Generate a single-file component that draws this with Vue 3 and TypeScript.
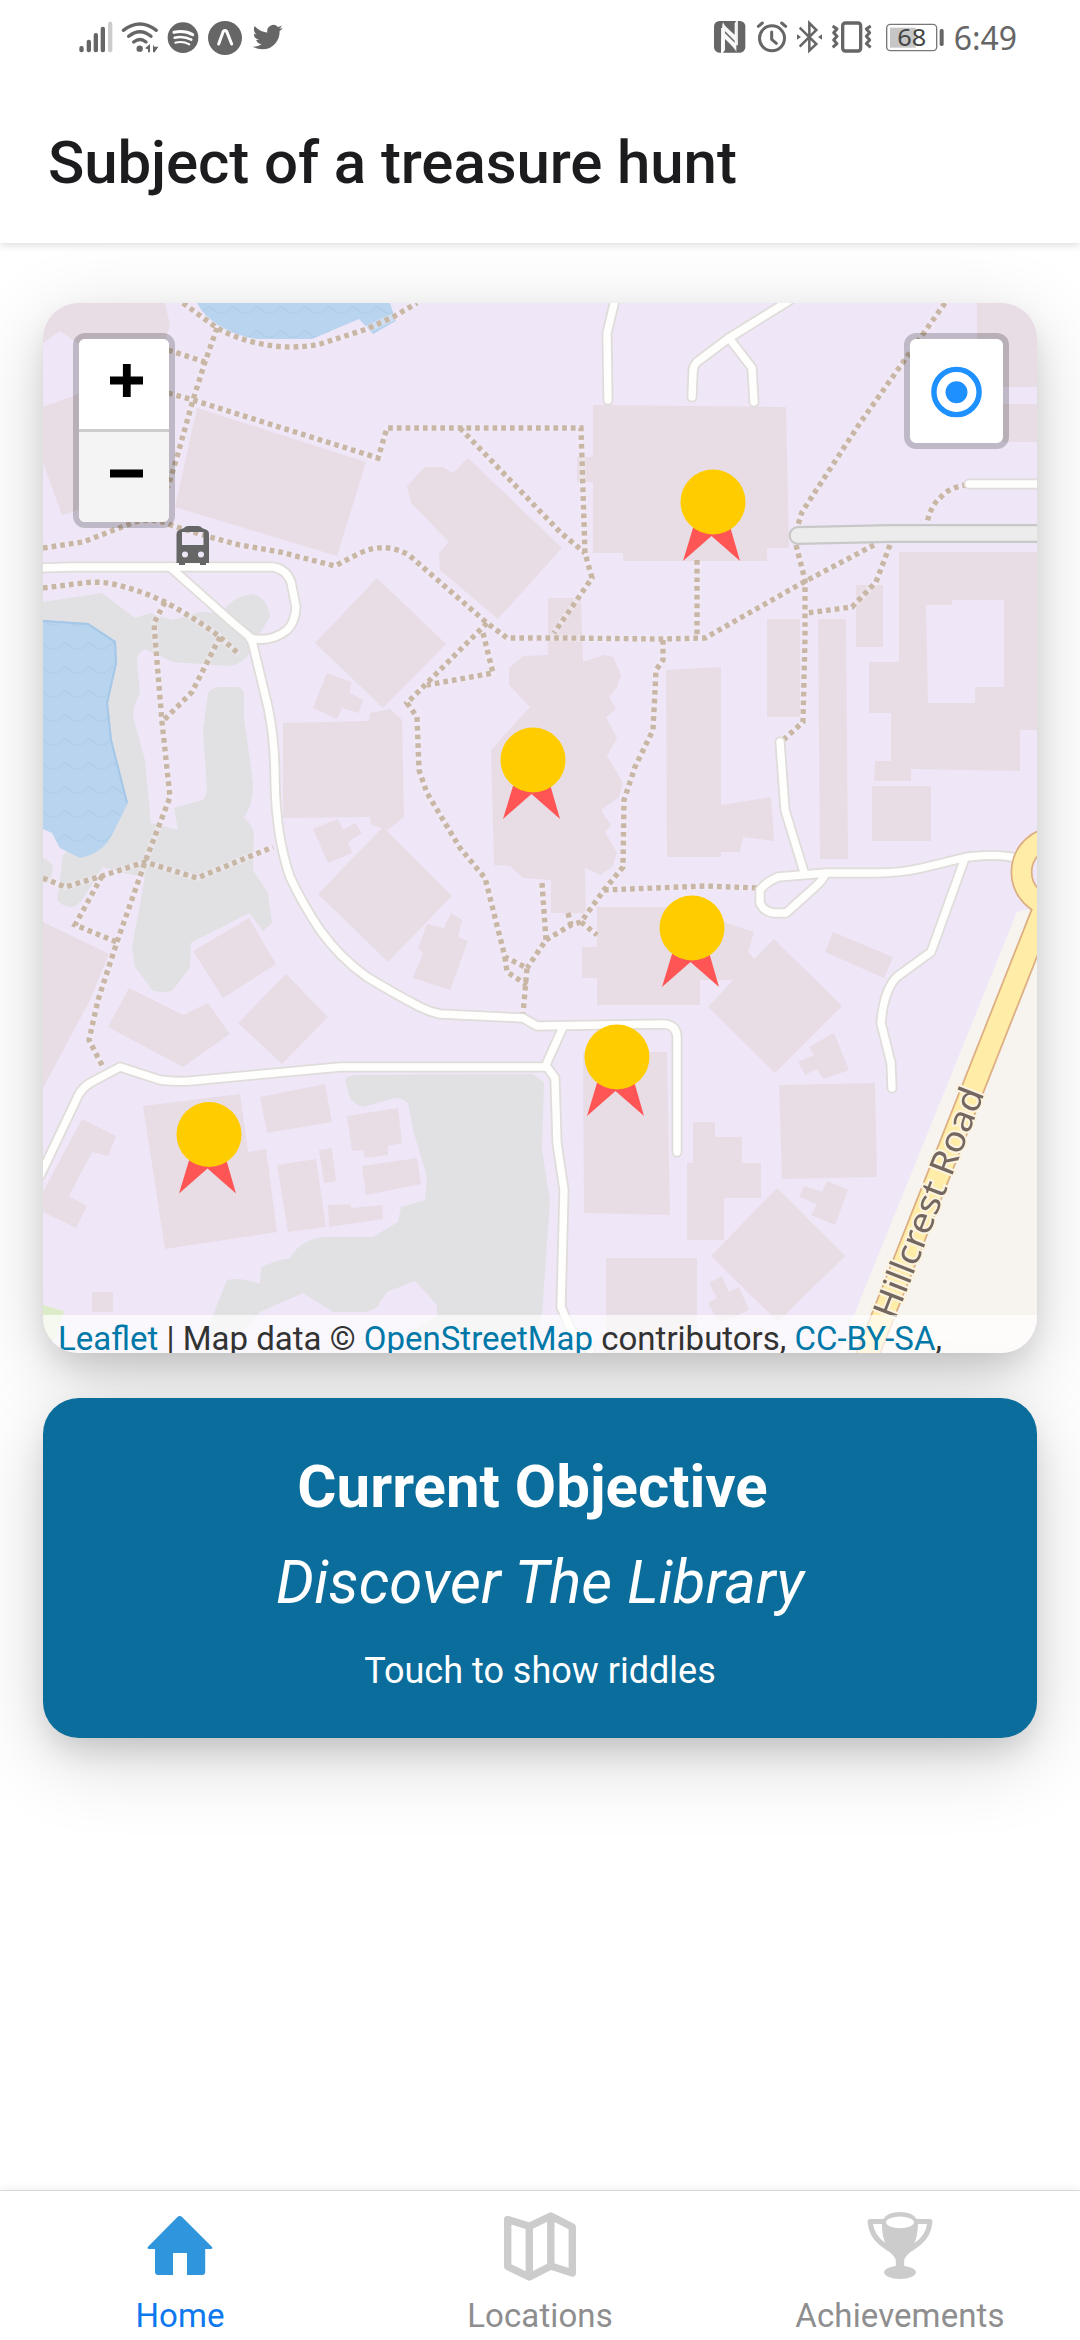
<script setup lang="ts">
interface Point {
  x: number
  y: number
}

interface Tab {
  id: 'home' | 'locations' | 'achievements'
  label: string
  active: boolean
}

const tabs: Tab[] = [
  { id: 'home', label: 'Home', active: true },
  { id: 'locations', label: 'Locations', active: false },
  { id: 'achievements', label: 'Achievements', active: false },
]

const medals: Point[] = [
  { x: 713, y: 502 },
  { x: 533, y: 760 },
  { x: 692, y: 928 },
  { x: 617, y: 1057 },
  { x: 209, y: 1134.5 },
]

const grass: string[] = [
  'M43 602L102 593L135 618L150 613L173 620L200 612L222 613Q232 596 253 594Q268 598 270 617L260 633L247 657Q238 666 227 666L173 662L145 649Q136 653 137 663L140 693Q133 705 133 717L145 760L151 823L178 830L174 808L202 800Q207 796 207 790L203 730L208 693Q212 687 220 687H238Q244 689 244 695L244 717L253 783Q254 802 244 818Q254 826 254 836L253 870L268 893L272 923L263 931L249 913L191 943L190 968L172 991Q162 993 153 991L135 967L132 947L145 877L123 873L103 867L82 900Q75 908 70 907Q60 905 57 900L63 855L80 840L60 780H43Z',
  'M43 858Q52 862 53 867L50 883H43Z',
  'M345 1080Q348 1075 357 1075L533 1074L544 1082L542 1150L550 1200L542 1315L535 1340H400L437 1315V1305L415 1281L387 1292L377 1307Q370 1312 363 1312H333L303 1293L260 1312L235 1340H205L213 1315L227 1280Q240 1277 260 1284L261 1268Q272 1261 290 1258Q300 1240 323 1237H373L398 1222L401 1207L425 1200L427 1177L413 1130L408 1103Q402 1098 395 1098L363 1107Q352 1103 350 1098Z',
]

const ponds: string[] = [
  'M197 303Q205 318 220 327Q238 337 257 339H312L359 319L373 334L396 321L390 303Z',
  'M43 620L88 623L116 641L117 663L108 703L112 740L128 803L113 833Q104 853 80 858L60 848L52 833L43 829Z',
]

const buildings: string[] = [
  '43,303 165,303 170,325 164,345 80,345 60,331 43,343',
  '43,407 73,396 90,390 90,505 73,512 62,515 43,463',
  '197,408 366,462 337,556 175,507',
  '468,458 562,548 498,619 440,570 439,553 449,542 411,503 407,486 425,467 443,467 453,473',
  '377,578 446,644 383,708 315,643',
  '977,303 1037,303 1037,387 977,387',
  '1000,404 1037,404 1037,442 1000,442',
  '593,405 786,407 789,548 767,548 767,561 623,561 623,553 593,553 593,482 577,482 577,457 593,457',
  '872,786 931,786 931,841 872,841',
  '856,585 883,585 883,647 856,647',
  '818,619 846,619 848,859 820,859',
  '767,619 800,619 800,717 767,717',
  '666,670 721,667 721,805 771,797 774,841 743,837 740,852 721,852 721,857 667,857',
  '548,598 581,598 583,662 604,655 613,657 621,675 617,687 609,697 616,709 606,717 617,738 607,756 623,783 619,797 601,810 611,825 605,832 617,853 612,867 600,875 585,868 586,913 551,913 551,880 523,878 510,866 494,865 491,750 530,707 509,685 509,668 523,656 548,655',
  '597,907 678,907 754,932 748,952 754,959 774,939 842,1006 775,1073 708,1007 733,980 700,980 700,1005 597,1005 597,978 582,978 582,947 597,947',
  '833,932 893,957 884,978 825,952',
  '583,1052 667,1052 670,1215 584,1213',
  '693,1122 715,1122 715,1137 742,1137 742,1163 761,1163 761,1198 724,1198 724,1240 687,1240 687,1163 693,1163',
  '779,1085 875,1083 877,1177 782,1179',
  '777,1188 845,1256 778,1322 711,1256',
  '606,1258 697,1258 697,1353 606,1353',
  '809,1047 834,1033 849,1070 823,1079 817,1069 805,1075 798,1062 814,1055',
  '827,1181 848,1190 835,1225 811,1215 817,1204 799,1197 804,1186 822,1192',
  '709,1283 722,1276 729,1292 739,1287 749,1310 719,1323 708,1303 717,1298',
  '327,673 351,682 350,693 363,700 359,713 342,708 337,719 313,708',
  '283,723 369,721 370,713 390,709 402,720 404,817 388,830 371,825 370,817 283,818',
  '313,829 338,819 343,830 355,823 362,833 348,842 352,853 328,863',
  '383,827 452,896 388,962 318,894',
  '427,924 444,928 451,913 462,920 458,937 468,941 450,990 413,978 423,953 418,948',
  '43,922 109,954 90,1000 43,1088',
  '249,918 276,964 223,998 193,951',
  '129,988 183,1015 208,1003 230,1034 183,1067 108,1027',
  '286,974 328,1017 282,1064 238,1023',
  '82,1119 116,1136 108,1156 92,1152 69,1196 87,1206 76,1228 43,1212 43,1192',
  '143,1106 240,1094 248,1152 266,1149 277,1232 165,1249',
  '260,1097 325,1084 332,1122 267,1133',
  '347,1116 398,1108 402,1143 388,1146 388,1155 365,1158 363,1150 352,1151',
  '362,1166 417,1158 421,1184 366,1195',
  '319,1150 332,1148 336,1181 324,1183',
  '277,1165 316,1159 326,1227 288,1232',
  '328,1205 350,1204 352,1208 382,1205 383,1219 329,1227',
  '92,1292 113,1292 113,1312 92,1312',
]

const footpaths: string[] = [
  'M183 303L217 328Q235 338 257 343Q274 347 290 347Q306 347 320 344L367 329L393 317L417 303',
  'M217 328L205 362L193 400L177 457L168 487',
  'M168 350L205 362',
  'M168 393L193 400L378 458L387 428H581L585 553L592 578L554 633',
  'M460 428L560 532L585 553',
  'M43 548L83 542L127 525Q150 515 173 526L210 537L240 545L280 552L335 566L360 553Q387 541 410 556L487 623L507 638H560L662 639L705 638L802 583L874 545',
  'M43 588L83 583Q98 581 113 584Q140 590 165 602Q195 618 220 637L239 654',
  'M165 602L154 623L155 637L162 722L170 797L145 862L117 942L98 1000L89 1040L103 1067',
  'M220 637L192 692L162 722',
  'M43 878L65 887L102 876L145 862L197 878L273 847',
  'M102 876L75 925L117 942',
  'M487 623L407 703L417 717L419 770L427 793L460 848L485 878L505 957L527 968L523 1014',
  'M505 957L507 972L527 985',
  'M483 633L493 673L427 685',
  'M542 883L546 940L527 968',
  'M546 940L571 925L581 922L604 890L623 867L624 800L635 767L653 730L656 670L663 660V638',
  'M568 913L571 925',
  'M581 922L597 935',
  'M604 890L705 886L759 888',
  'M697 560V638',
  'M945 303L860 423L802 512L798 525',
  'M796 545L805 580L805 638L803 722L781 742',
  'M967 485Q949 487 940 498Q931 505 927 523',
  'M890 545L876 582L852 607L807 613',
]

const roads: string[] = [
  'M40 568L70 567H273Q286 569 291 582L296 607Q295 623 287 630Q271 643 250 638',
  'M170 567L233 623L250 637L253 645L268 707Q275 740 275 780Q276 837 290 877Q302 903 320 930Q340 958 367 977Q395 994 420 1007Q430 1012 440 1014L523 1018L537 1026L663 1024Q677 1025 677 1037V1152',
  'M40 1176L78 1096Q82 1088 90 1083L120 1067L160 1080Q175 1082 190 1081L340 1067H547L555 1078L557 1143L564 1190L561 1307L571 1330L590 1350',
  'M563 1027L545 1067',
  'M615 300L607 333L608 400',
  'M790 300L729 338L697 362Q693 366 693 372L692 397',
  'M729 338L752 368L754 402',
  'M969 484H1040',
  'M780 742L785 810L804 872',
  'M1020 859Q1000 853 967 857L922 868Q900 873 877 873H826L778 877Q766 882 760 890V903Q764 912 774 913H786L815 887Q823 880 826 873',
  'M965 858L931 952L898 976Q884 988 881 1023L891 1063L892 1088',
]
</script>

<template>
  <div class="screen">
    <div class="statusbar">
      <svg class="status-left" viewBox="0 0 720 240" fill="#666">
        <rect x="58" y="138" width="13" height="19" rx="6" />
        <rect x="80" y="119" width="13" height="38" rx="6" />
        <rect x="101" y="99" width="13" height="58" rx="6" />
        <rect x="122" y="80" width="13" height="77" rx="6" />
        <rect x="144" y="65" width="13" height="92" rx="6" fill="#ccc" />
        <g fill="none" stroke="#666" stroke-width="10" stroke-linecap="round">
          <path d="M190 91Q240 53 289 91" />
          <path d="M206 109Q240 81 273 109" />
          <path d="M221 126Q240 111 258 126" />
        </g>
        <circle cx="239" cy="146" r="9.500" />
        <path d="M255 145L270 132V157H264V148ZM279 134L283 140H295L284 157H279Z" />
        <circle cx="369" cy="113" r="46" />
        <g fill="none" stroke="#fff" stroke-linecap="round">
          <path d="M342 97Q373 90 398 104" stroke-width="9" />
          <path d="M344 113Q372 107 394 119" stroke-width="7.500" />
          <path d="M346 128Q369 123 388 133" stroke-width="6" />
        </g>
        <circle cx="495" cy="114" r="51" />
        <path d="M476 132L490 94Q495 89 500 94L515 132" fill="none" stroke="#fff" stroke-width="9" stroke-linecap="round" stroke-linejoin="round" />
        <path transform="translate(578 66.500) scale(3.750)" d="M23.953 4.57a10 10 0 01-2.825.775 4.958 4.958 0 002.163-2.723c-.951.555-2.005.959-3.127 1.184a4.92 4.92 0 00-8.384 4.482C7.69 8.095 4.067 6.13 1.64 3.162a4.822 4.822 0 00-.666 2.475c0 1.71.87 3.213 2.188 4.096a4.904 4.904 0 01-2.228-.616v.06a4.923 4.923 0 003.946 4.827 4.996 4.996 0 01-2.212.085 4.936 4.936 0 004.604 3.417 9.867 9.867 0 01-6.102 2.105c-.39 0-.779-.023-1.17-.067a13.995 13.995 0 007.557 2.209c9.053 0 13.998-7.496 13.998-13.985 0-.21 0-.42-.015-.63A9.935 9.935 0 0024 4.59z" />
      </svg>
      <svg class="status-right" viewBox="0 0 1020 240" fill="#666">
        <rect x="42" y="63" width="94" height="95" rx="16" />
        <path d="M66 84V158M111 62V136" stroke="#fff" stroke-width="5" fill="none" />
        <path d="M69 67Q74 80 104 104V122L75 93V150L69 158L63 158L67 75ZM109 156Q106 146 75 117V100L104 128V70L109 63Z" fill="#fff" opacity=".95" />
        <g fill="none" stroke="#666" stroke-width="9" stroke-linecap="round" stroke-linejoin="round">
          <circle cx="216" cy="115" r="37.500" />
          <path d="M215 96V118L229 130M175 79L187 69M257 79L245 69" />
        </g>
        <path d="M299 83L349 132L328 152V69L349 90L299 140" fill="none" stroke="#666" stroke-width="7.500" />
        <path d="M291 103L303 111L291 119ZM366 103L354 111L366 119Z" />
        <rect x="428" y="69" width="54" height="84" rx="8" fill="none" stroke="#666" stroke-width="10" />
        <g fill="none" stroke="#666" stroke-width="9" stroke-linejoin="round">
          <path d="M398 78L411 87L401 98L411 109L401 120L411 131L398 142" />
          <path d="M512 78L499 87L509 98L499 109L509 120L499 131L512 142" />
        </g>
        <rect x="560" y="73" width="150" height="79" rx="11" fill="none" stroke="#777" stroke-width="4" />
        <rect x="570" y="83" width="77" height="60" fill="#c6c6c6" />
        <rect x="719" y="87" width="12" height="51" rx="5" />
        <text x="592" y="137" font-size="72" textLength="87" lengthAdjust="spacingAndGlyphs" fill="#444">68</text>
        <text x="761" y="150" font-size="100" textLength="190" lengthAdjust="spacingAndGlyphs">6:49</text>
      </svg>
    </div>

    <header class="header">
      <h1 class="title">Subject of a treasure hunt</h1>
    </header>

    <main class="content">
      <section class="map">
        <svg class="tiles" viewBox="43 303 994 1050">
          <defs>
            <pattern id="waves" x="5" y="11" width="24" height="24" patternUnits="userSpaceOnUse">
              <rect width="24" height="24" fill="#b8d4ee" />
              <path d="M0 14Q3 15 6 12L10 9Q12 7 14 9L18 12Q21 15 24 14" fill="none" stroke="#b0cdea" stroke-width="1.300" />
            </pattern>
          </defs>
          <rect x="43" y="303" width="994" height="1050" fill="#efe7f8" />
          <g class="soft">
            <path v-for="d in grass" :key="d" :d="d" fill="#e1e1e4" />
            <path d="M43 1305L64 1311L55 1340H43Z" fill="#dcecc9" />
            <path v-for="d in ponds" :key="d" :d="d" fill="url(#waves)" />
            <path d="M43 621L88 624L115 642L116 663L107 703L111 740L127 803" fill="none" stroke="#a5c7e8" stroke-width="2" />
            <path d="M1017 912L1050 905V1365H834Z" fill="#f7f4ef" />
            <polygon v-for="p in buildings" :key="p" :points="p" fill="#e8dce5" />
            <path
              fill="#e8dce5"
              fill-rule="evenodd"
              d="M899 552H1040V730H1020V771L911 769V781H874L875 761H891V713H869V662H899ZM926 605H952V600H1004V687H975V703H928Z"
            />
            <g fill="none" stroke="#f4eef6" stroke-width="7" stroke-linejoin="round" opacity=".4">
              <path v-for="d in footpaths" :key="d" :d="d" />
            </g>
            <g class="dots">
              <path v-for="d in footpaths" :key="d" :d="d" />
            </g>
            <g class="casing">
              <path v-for="d in roads" :key="d" :d="d" />
            </g>
            <g class="lane">
              <path v-for="d in roads" :key="d" :d="d" />
            </g>
            <g fill="none" stroke-linecap="round">
              <path d="M798 535.500L890 533.500H1050" stroke="#c9c8c9" stroke-width="19" />
              <path d="M798 535.500L890 533.500H1050" stroke="#ececec" stroke-width="14.500" />
            </g>
            <g fill="none">
              <path d="M1049 896L858 1379" stroke="#dcae82" stroke-width="24" />
              <circle cx="1056" cy="872" r="34.500" stroke="#dcae82" stroke-width="22" />
              <path d="M1049 896L858 1379" stroke="#ffeca6" stroke-width="20.500" />
              <circle cx="1056" cy="872" r="34.500" stroke="#ffeca6" stroke-width="18.500" />
            </g>
            <text class="road-name" transform="translate(895 1321) rotate(-68.500)" textLength="245" lengthAdjust="spacingAndGlyphs">Hillcrest Road</text>
            <path
              fill="#666"
              fill-rule="evenodd"
              d="M184 528Q185 526 188 526H198Q201 526 202 528L207 530Q209 531 209 534V563H206V565H200V563H185V565H179V563H176.500V534Q176.500 531 179 530ZM182 532V545H203.500V532ZM182 554.500a3 3 0 1 0 6 0a3 3 0 1 0-6 0ZM198 554.500a3 3 0 1 0 6 0a3 3 0 1 0-6 0Z"
            />
          </g>
          <g v-for="m in medals" :key="m.x" :transform="`translate(${m.x} ${m.y})`">
            <path d="M-20 26L-30 59L-1.500 34L27 59L17.500 26Z" fill="#ff5555" />
            <circle r="32.500" fill="#ffcc00" />
          </g>
        </svg>

        <div class="control zoom">
          <button class="key" aria-label="Zoom in">
            <svg viewBox="0 0 90 90"><path d="M31 41.500H64M47.800 25V58" stroke="#000" stroke-width="7.800" /></svg>
          </button>
          <button class="key key-out" aria-label="Zoom out">
            <svg viewBox="0 0 90 90"><path d="M31 41.500H64" stroke="#000" stroke-width="7.800" /></svg>
          </button>
        </div>

        <div class="control locate">
          <svg viewBox="0 0 93 104">
            <circle cx="46.500" cy="53" r="22.600" fill="none" stroke="#1e90ff" stroke-width="5.400" />
            <circle cx="46.500" cy="53.300" r="11" fill="#1e90ff" />
          </svg>
        </div>

        <div class="attribution">
          <a>Leaflet</a> | Map data © <a>OpenStreetMap</a> contributors, <a>CC-BY-SA</a>,
        </div>
      </section>

      <section class="objective">
        <h2 class="objective-title">Current Objective&nbsp;</h2>
        <p class="objective-name">Discover The Library</p>
        <p class="objective-hint">Touch to show riddles</p>
      </section>
    </main>

    <nav class="tabs">
      <a v-for="tab in tabs" :key="tab.id" class="tab" :class="{ active: tab.active }">
        <svg v-if="tab.id === 'home'" class="icon" viewBox="0 0 72 72">
          <path
            fill="#2f95dc"
            d="M33.200 6.200Q35.700 3.800 38.300 6.200L67.800 35.800Q69.300 38 67 38H61.200V61Q61.200 64 58 64H43V42H29V64H14.500Q11 64 11 61V38H5Q2.700 38 4 35.800Z"
          />
        </svg>
        <svg v-else-if="tab.id === 'locations'" class="icon" viewBox="0 0 72 72">
          <g fill="none" stroke="#ccc" stroke-width="7.400" stroke-linejoin="round">
            <path d="M3.700 8.500L25.300 15.300L46.800 5L68.300 16V62L46.800 55L25.300 66L3.700 55.500ZM25.300 15.300V66M46.800 5V55" />
          </g>
        </svg>
        <svg v-else class="icon" viewBox="0 0 72 72">
          <g transform="translate(3.500 1)" fill="#ccc">
            <path
              fill-rule="evenodd"
              d="M16 7Q20 0 32.500 0Q45 0 49 7H62.500Q65 7 65 9.500Q64 24 53 33Q48 37 43 40Q37 45 36.700 48.500V54.500H28.300V48.500Q28 45 22 40Q17 37 12 33Q1 24 0 9.500Q0 7 2.500 7ZM18.500 10.300A14 5.900 0 1 0 46.500 10.300A14 5.900 0 1 0 18.500 10.300ZM5.500 12Q7 23 17.800 31Q14.500 24 14.500 12ZM50.500 12Q50 24 47 31Q58.500 23 59.500 12Z"
            />
            <ellipse cx="32.500" cy="60.300" rx="16" ry="6.600" />
          </g>
        </svg>
        <span class="tab-label">{{ tab.label }}</span>
      </a>
    </nav>
  </div>
</template>

<style>
body {
  background: #fff;
}
</style>

<style scoped>
.screen {
  width: 1080px;
  height: 2340px;
  display: flex;
  flex-direction: column;
  overflow: hidden;
  background: #fff;
  font-family: Roboto, sans-serif;
}
.statusbar {
  flex: none;
  height: 80px;
  display: flex;
  justify-content: space-between;
  padding: 0 40px 0 60px;
  background: #fff;
  z-index: 2;
}
.status-left {
  width: 240px;
  height: 80px;
}
.status-right {
  width: 340px;
  height: 80px;
  font-family: "Noto Sans", sans-serif;
}
.header {
  flex: none;
  height: 163px;
  display: flex;
  align-items: center;
  padding: 2px 48px 0;
  box-sizing: border-box;
  background: #fff;
  box-shadow: 0 2px 8px rgba(0, 0, 0, 0.14);
  clip-path: inset(0 0 -30px 0);
  z-index: 2;
}
.title {
  margin: 0;
  font-size: 60px;
  line-height: 70px;
  font-weight: 500;
  letter-spacing: -0.1px;
  color: #1c1c1e;
}
.content {
  flex: 1;
  display: flex;
  flex-direction: column;
  gap: 45px;
  padding: 60px 43px 0;
}
.map,
.objective {
  position: relative;
  border-radius: 36px;
  box-shadow: 0 16px 32px -6px rgba(0, 0, 0, 0.14), 0 20px 80px rgba(0, 0, 0, 0.17);
}
.map {
  height: 1050px;
  overflow: hidden;
  flex: none;
}
.tiles {
  display: block;
  width: 994px;
  height: 1050px;
}
.soft {
  filter: blur(0.7px);
}
.dots {
  fill: none;
  stroke: #c9b7a6;
  stroke-width: 5.4;
  stroke-dasharray: 4.700 4;
}
.casing,
.lane {
  fill: none;
  stroke-linecap: round;
  stroke-linejoin: round;
}
.casing {
  stroke: #dfdcda;
  stroke-width: 11;
}
.lane {
  stroke: #fefefc;
  stroke-width: 7.4;
}
.road-name {
  font-family: "Noto Sans", sans-serif;
  font-size: 35px;
  fill: #74675f;
  stroke: #fbf3df;
  stroke-width: 4;
  paint-order: stroke;
}
.control {
  position: absolute;
  top: 30px;
  border: 6px solid rgba(0, 0, 0, 0.2);
  border-radius: 12px;
  background: #fff;
  background-clip: padding-box;
  overflow: hidden;
}
.zoom {
  left: 30px;
  width: 90px;
  display: flex;
  flex-direction: column;
}
.key {
  display: block;
  height: 90px;
  padding: 0;
  border: 0;
  background: #fff;
}
.key svg,
.locate svg {
  display: block;
}
.key-out {
  height: 93px;
  border-top: 3px solid #ccc;
  background: #f4f4f4;
}
.locate {
  right: 28px;
  width: 93px;
  height: 104px;
}
.attribution {
  position: absolute;
  left: 0;
  right: 0;
  bottom: 0;
  height: 38px;
  padding-left: 15px;
  background: rgba(255, 255, 255, 0.7);
  font-size: 33px;
  line-height: 47px;
  white-space: nowrap;
  color: #333;
}
.attribution a {
  color: #0078a8;
}
.objective {
  flex: none;
  height: 340px;
  padding-top: 54px;
  box-sizing: border-box;
  background: #0b6d9b;
  color: #fff;
  text-align: center;
}
.objective-title,
.objective-name {
  margin: 0;
  font-size: 60px;
  line-height: 70px;
}
.objective-title {
  font-weight: 700;
}
.objective-name {
  margin-top: 26px;
  font-style: italic;
  letter-spacing: 0.1px;
}
.objective-hint {
  margin: 32px 0 0;
  font-size: 36px;
  line-height: 42px;
}
.tabs {
  flex: none;
  height: 150px;
  box-sizing: border-box;
  display: flex;
  border-top: 1px solid #d8d8d8;
  background: #fff;
  box-shadow: 0 0 10px rgba(0, 0, 0, 0.08);
}
.tab {
  flex: 1;
  display: flex;
  flex-direction: column;
  align-items: center;
  padding-top: 20px;
  color: #8e8e8f;
}
.icon {
  width: 72px;
  height: 72px;
}
.tab-label {
  margin-top: 13px;
  font-size: 33px;
  line-height: 39px;
  letter-spacing: 0.1px;
}
.active {
  color: #0e78ee;
}
</style>
